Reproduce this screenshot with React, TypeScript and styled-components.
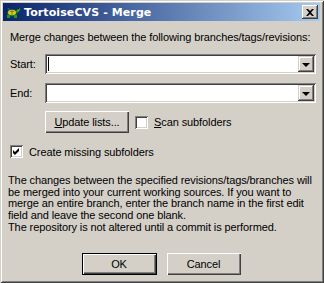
import styled, { createGlobalStyle } from "styled-components";

const GlobalStyle = createGlobalStyle`
  html, body {
    margin: 0;
    padding: 0;
    background: #d4d0c8;
  }
  body {
    font-family: "Liberation Sans", Arial, sans-serif;
    font-size: 11px;
    letter-spacing: -0.1px;
    color: #000;
  }
`;

const Window = styled.div`
  width: 324px;
  height: 283px;
  box-sizing: border-box;
  background: #d4d0c8;
  padding: 3px 4px 4px 3px;
  box-shadow:
    inset 1px 1px 0 #d4d0c8,
    inset -1px -1px 0 #404040,
    inset 2px 2px 0 #ffffff,
    inset -2px -2px 0 #808080;
  display: flex;
  flex-direction: column;
  white-space: nowrap;
`;

const TitleBar = styled.div`
  height: 18px;
  background: linear-gradient(to right, #0a246a, #a6caf0);
  display: flex;
  align-items: center;
  padding: 0 2px 0 2px;
  gap: 3px;
`;

const TitleText = styled.div`
  flex: 1;
  color: #fff;
  font-family: "DejaVu Sans", "Liberation Sans", sans-serif;
  font-weight: bold;
  font-size: 11px;
  letter-spacing: 0.1px;
`;

const CloseButton = styled.div`
  width: 16px;
  height: 14px;
  box-sizing: border-box;
  background: #d4d0c8;
  box-shadow:
    inset -1px -1px 0 #404040,
    inset 1px 1px 0 #ffffff,
    inset -2px -2px 0 #808080;
  display: flex;
  align-items: center;
  justify-content: center;
`;

const Body = styled.div`
  flex: 1;
  padding: 10px 4px 0 7px;
  display: flex;
  flex-direction: column;
`;

const Intro = styled.div`
  line-height: 13px;
  margin-bottom: 10px;
`;

const FieldGrid = styled.div`
  display: grid;
  grid-template-columns: 35px 1fr;
  row-gap: 9px;
  align-items: center;
`;

const Combo = styled.div`
  height: 20px;
  box-sizing: border-box;
  background: #fff;
  box-shadow:
    inset 1px 1px 0 #808080,
    inset -1px -1px 0 #ffffff,
    inset 2px 2px 0 #404040,
    inset -2px -2px 0 #d4d0c8;
  display: flex;
  align-items: stretch;
  justify-content: space-between;
  padding: 2px;
`;

const Caret = styled.div`
  width: 1px;
  height: 14px;
  background: #000;
  margin: 1px 0 0 1px;
`;

const DropButton = styled.div`
  width: 16px;
  box-sizing: border-box;
  background: #d4d0c8;
  box-shadow:
    inset -1px -1px 0 #404040,
    inset 1px 1px 0 #d4d0c8,
    inset -2px -2px 0 #808080,
    inset 2px 2px 0 #ffffff;
  display: flex;
  align-items: center;
  justify-content: center;
`;

const Arrow = styled.div`
  width: 0;
  height: 0;
  border-left: 4px solid transparent;
  border-right: 4px solid transparent;
  border-top: 4px solid #000;
  margin-top: 1px;
`;

const ActionRow = styled.div`
  display: flex;
  align-items: center;
  gap: 6px;
  margin: 8px 0 0 35px;
`;

const Button = styled.div<{ $default?: boolean; $width: number }>`
  width: ${(p) => p.$width}px;
  height: 22px;
  box-sizing: border-box;
  background: #d4d0c8;
  display: flex;
  align-items: center;
  justify-content: center;
  box-shadow: ${(p) =>
    p.$default
      ? "inset 0 0 0 1px #000, inset 1px 1px 0 1px #ffffff, inset -1px -1px 0 1px #404040, inset -2px -2px 0 1px #808080"
      : "inset 1px 1px 0 #ffffff, inset -1px -1px 0 #404040, inset -2px -2px 0 #808080"};
`;

const CheckLabel = styled.label`
  display: flex;
  align-items: center;
  gap: 6px;
`;

const CheckBox = styled.span`
  width: 13px;
  height: 13px;
  box-sizing: border-box;
  background: #fff;
  box-shadow:
    inset 1px 1px 0 #808080,
    inset -1px -1px 0 #ffffff,
    inset 2px 2px 0 #404040,
    inset -2px -2px 0 #d4d0c8;
  display: flex;
  align-items: center;
  justify-content: center;
`;

const CreateRow = styled.div`
  margin: 12px 0 0 0;
`;

const Note = styled.p`
  margin: 17px 0 0 -2px;
  line-height: 11.7px;
`;

const Footer = styled.div`
  display: flex;
  justify-content: center;
  gap: 10px;
  margin-top: 19px;
  padding-right: 4px;
`;

function Turtle() {
  return (
    <svg width="16" height="14" viewBox="0 0 16 14">
      <path d="M2 4 L4 3 L5 5 Z" fill="#1f8a1f" />
      <ellipse cx="7" cy="8" rx="5" ry="3.6" fill="#1a6a1a" />
      <ellipse cx="7" cy="7.5" rx="4" ry="2.8" fill="#d8c830" />
      <path d="M5 6.5 L9 6.5 M7 5 L7 10" stroke="#7a8a10" strokeWidth="1" />
      <rect x="2" y="10" width="3" height="3" fill="#1f9a1f" />
      <rect x="9" y="10" width="3" height="3" fill="#1f9a1f" />
      <path d="M11 6 L14 3 L15.5 4 L14 6.5 L12 8 Z" fill="#2aa82a" />
      <rect x="13" y="3" width="1" height="1" fill="#000" />
    </svg>
  );
}

function Check() {
  return (
    <svg width="7" height="7" viewBox="0 0 7 7">
      <path d="M0 2 L2 4 L6 0 L6 3 L2 7 L0 5 Z" fill="#000" />
    </svg>
  );
}

const noteLines = [
  "The changes between the specified revisions/tags/branches will",
  "be merged into your current working sources. If you want to",
  "merge an entire branch, enter the branch name in the first edit",
  "field and leave the second one blank.",
  "The repository is not altered until a commit is performed.",
];

export default function App() {
  return (
    <>
      <GlobalStyle />
      <Window>
        <TitleBar>
          <Turtle />
          <TitleText>TortoiseCVS - Merge</TitleText>
          <CloseButton>
            <svg width="8" height="7" viewBox="0 0 8 7">
              <path d="M0 0 H2 L4 2 L6 0 H8 L5 3.5 L8 7 H6 L4 5 L2 7 H0 L3 3.5 Z" fill="#000" />
            </svg>
          </CloseButton>
        </TitleBar>
        <Body>
          <Intro>Merge changes between the following branches/tags/revisions:</Intro>
          <FieldGrid>
            <span>Start:</span>
            <Combo>
              <Caret />
              <DropButton>
                <Arrow />
              </DropButton>
            </Combo>
            <span>End:</span>
            <Combo>
              <span />
              <DropButton>
                <Arrow />
              </DropButton>
            </Combo>
          </FieldGrid>
          <ActionRow>
            <Button $width={84}>
              <span>
                <u>U</u>pdate lists...
              </span>
            </Button>
            <CheckLabel>
              <CheckBox />
              <span>
                <u>S</u>can subfolders
              </span>
            </CheckLabel>
          </ActionRow>
          <CreateRow>
            <CheckLabel>
              <CheckBox>
                <Check />
              </CheckBox>
              <span>Create missing subfolders</span>
            </CheckLabel>
          </CreateRow>
          <Note>
            {noteLines.map((line, i) => (
              <span key={i}>
                {line}
                <br />
              </span>
            ))}
          </Note>
          <Footer>
            <Button $default $width={75}>OK</Button>
            <Button $width={74}>Cancel</Button>
          </Footer>
        </Body>
      </Window>
    </>
  );
}
